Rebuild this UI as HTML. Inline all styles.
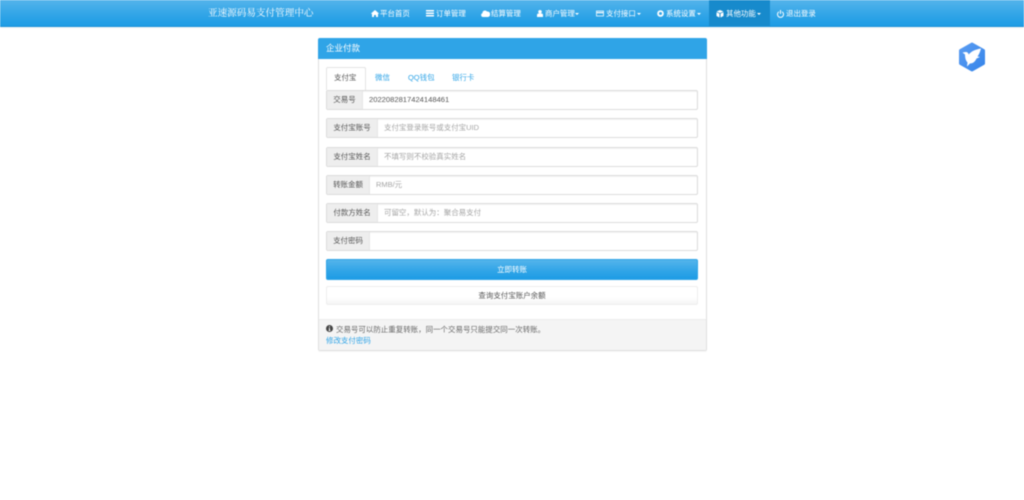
<!DOCTYPE html>
<html lang="zh-CN">
<head>
<meta charset="utf-8">
<title>企业付款</title>
<style>
html,body{margin:0;padding:0;width:1024px;height:500px;overflow:hidden;background:#fff}
body{font-family:"Liberation Sans","Noto Sans CJK SC",sans-serif;font-size:7.47px;color:#666;position:relative}
#w{position:absolute;left:0;top:0;width:1024px;height:500px;filter:blur(.45px);background:#fff;overflow:hidden}
.a{position:absolute;white-space:nowrap}
#nav{left:0;top:0;width:1024px;height:26px;background:linear-gradient(#54b4eb,#2fa4e7 60%,#1d9ce5);border-bottom:1px solid #1b90d8;box-shadow:0 1px 2px rgba(0,0,0,.06)}
#active{left:709px;top:0;width:61px;height:26px;background:#178acc}
.n{color:#fff;top:8px;line-height:11px;height:11px;font-size:7.47px}
.i{position:absolute}
.c{position:absolute;top:13px;width:0;height:0;border-left:2px solid transparent;border-right:2px solid transparent;border-top:2px solid #fff}
#panel{left:318px;top:38px;width:387px;height:311px;border:1px solid #e0e0e0;border-radius:2px;background:#fff;box-shadow:0 1px 1px rgba(0,0,0,.04);box-sizing:content-box}
#head{left:318px;top:38px;width:389px;height:21px;background:#2fa4e7;border-radius:2px 2px 0 0;color:#fff;font-size:8.53px;line-height:21px}
#head span{padding-left:8px}
.tab{top:67px;height:22px;line-height:22px;color:#2fa4e7}
#t0{left:326px;top:67px;width:38px;height:22px;border:1px solid #e4e4e4;border-bottom:0;border-radius:2px 2px 0 0;background:#fff;box-sizing:content-box}
.g{left:326px;width:372px;height:20px;box-sizing:border-box;border:1px solid #dcdcdc;border-radius:2px;background:#fff;box-shadow:inset 0 1px 1px rgba(0,0,0,.05);line-height:18px}
.g b{font-weight:normal;position:absolute;left:0;top:0;height:18px;background:#eee;border-right:1px solid #e6e6e6;text-align:center;color:#555;box-sizing:content-box;border-radius:2px 0 0 2px}
.g i{font-style:normal;position:absolute;top:0;color:#a5a5a5}
.g u{text-decoration:none;position:absolute;top:0;color:#555;font-size:7.6px}
#pri{left:326px;top:259px;width:372px;height:21px;box-sizing:border-box;border:1px solid #2fa4e7;border-radius:2px;background:linear-gradient(#54b4eb,#2fa4e7 60%,#1d9ce5);color:#fff;text-align:center;line-height:19px}
#def{left:326px;top:286px;width:372px;height:19px;box-sizing:border-box;border:1px solid #eee;border-radius:2px;background:linear-gradient(#fff,#fff 60%,#f5f5f5);color:#555;text-align:center;line-height:17px}
#foot{left:319px;top:319px;width:387px;height:31px;background:#f4f4f4;border-top:1px solid #ececec;box-sizing:border-box;border-radius:0 0 2px 2px}
</style>
</head>
<body>
<div id="w">
<div class="a" id="nav"></div>
<div class="a" id="active"></div>
<div class="a" style="left:208px;top:7px;line-height:14px;color:#fff;font-size:9.6px;font-family:'Liberation Serif','Noto Serif CJK SC',serif">亚速源码易支付管理中心</div>

<svg class="i" style="left:371px;top:10px" width="8" height="7" viewBox="0 0 16 14"><path fill="#fff" d="M8 0 0 7l1 1 1-1v7h4v-4h4v4h4V7l1 1 1-1z"/></svg>
<div class="a n" style="left:380px">平台首页</div>
<svg class="i" style="left:426px;top:10px" width="8" height="7" viewBox="0 0 16 14"><path fill="#fff" d="M0 0h16v3H0zM0 5h16v3H0zM0 10h16v3H0z"/></svg>
<div class="a n" style="left:436px">订单管理</div>
<svg class="i" style="left:481px;top:10px" width="9" height="7" viewBox="0 0 18 14"><path fill="#fff" d="M4 14a4 4 0 0 1-1-7.800A5 5 0 0 1 12 3a4 4 0 0 1 2 11z"/></svg>
<div class="a n" style="left:491px">结算管理</div>
<svg class="i" style="left:537px;top:10px" width="6" height="7" viewBox="0 0 12 14"><circle cx="6" cy="3.500" r="3.500" fill="#fff"/><path fill="#fff" d="M0 14V10q0-3 3-3h6q3 0 3 3v4z"/></svg>
<div class="a n" style="left:545px">商户管理</div><div class="c" style="left:575px"></div>
<svg class="i" style="left:596px;top:10px" width="8" height="7" viewBox="0 0 16 14"><path fill="none" stroke="#fff" stroke-width="1.500" d="M1 2h14v10H1z"/><path fill="#fff" d="M1 4h14v2.500H1z"/></svg>
<div class="a n" style="left:606px">支付接口</div><div class="c" style="left:637px"></div>
<svg class="i" style="left:657px;top:10px" width="7" height="7" viewBox="0 0 14 14"><circle cx="7" cy="7" r="4.800" fill="none" stroke="#fff" stroke-width="3.600"/></svg>
<div class="a n" style="left:666px">系统设置</div><div class="c" style="left:697px"></div>
<svg class="i" style="left:716px;top:10px" width="8" height="8" viewBox="0 0 16 16"><path fill="#fff" d="M8 0l7 3-7 3-7-3zM1 4.500l6 2.500v8l-6-3zM15 4.500 9 7v8l6-3z"/></svg>
<div class="a n" style="left:726px">其他功能</div><div class="c" style="left:757px"></div>
<svg class="i" style="left:777px;top:9.500px" width="7" height="8" viewBox="0 0 14 16"><path fill="none" stroke="#fff" stroke-width="2" d="M4 3.500a6 6 0 1 0 6 0M7 0v8"/></svg>
<div class="a n" style="left:786px">退出登录</div>

<div class="a" id="panel"></div>
<div class="a" id="head"><span>企业付款</span></div>

<div class="a" id="t0"></div>
<div class="a tab" style="left:334px;color:#555">支付宝</div>
<div class="a tab" style="left:375px">微信</div>
<div class="a tab" style="left:408px">QQ钱包</div>
<div class="a tab" style="left:452px">银行卡</div>

<div class="a g" style="top:90px"><b style="width:35px">交易号</b><u style="left:42px">2022082817424148461</u></div>
<div class="a g" style="top:118px"><b style="width:50px">支付宝账号</b><i style="left:57px">支付宝登录账号或支付宝UID</i></div>
<div class="a g" style="top:147px"><b style="width:50px">支付宝姓名</b><i style="left:57px">不填写则不校验真实姓名</i></div>
<div class="a g" style="top:175px"><b style="width:42px">转账金额</b><i style="left:49px">RMB/元</i></div>
<div class="a g" style="top:203px"><b style="width:50px">付款方姓名</b><i style="left:57px">可留空，默认为：聚合易支付</i></div>
<div class="a g" style="top:231px"><b style="width:42px">支付密码</b></div>

<div class="a" id="pri">立即转账</div>
<div class="a" id="def">查询支付宝账户余额</div>

<div class="a" id="foot"></div>
<svg class="i" style="left:326px;top:325px" width="7" height="7" viewBox="0 0 14 14"><circle cx="7" cy="7" r="7" fill="#444"/><path fill="#f5f5f5" d="M6 2.500h2v2H6zM5.500 6H8v4.500h1V12H5v-1.500h1V7.300h-.5z"/></svg>
<div class="a" style="left:336px;top:324px;line-height:11px">交易号可以防止重复转账，同一个交易号只能提交同一次转账。</div>
<div class="a" style="left:326px;top:335px;line-height:11px;color:#2fa4e7">修改支付密码</div>

<svg class="i" style="left:957px;top:41px" width="30" height="32" viewBox="0 0 30 32">
<defs><linearGradient id="h" x1="0" y1="0" x2="1" y2="1"><stop offset="0" stop-color="#5a9cf2"/><stop offset="1" stop-color="#3585ea"/></linearGradient></defs>
<path fill="url(#h)" stroke="url(#h)" stroke-width="3" stroke-linejoin="round" d="M15 3 26.500 9.500V22.500L15 29 3.500 22.500V9.500z"/>
<path fill="#fff" d="M5.500 11.500 8.500 11C10 10.800 11 11.500 11.800 13.500 14 10.500 18 8.500 24 7.500 23 11 22 13.500 20.500 15.500L23 16 19.500 17.500C18 21 15.500 22.500 13 22.500L10 25.500 10.500 21.500C8.500 19.500 8 16 8 13.500z"/>
</svg>
</div>
</body>
</html>
